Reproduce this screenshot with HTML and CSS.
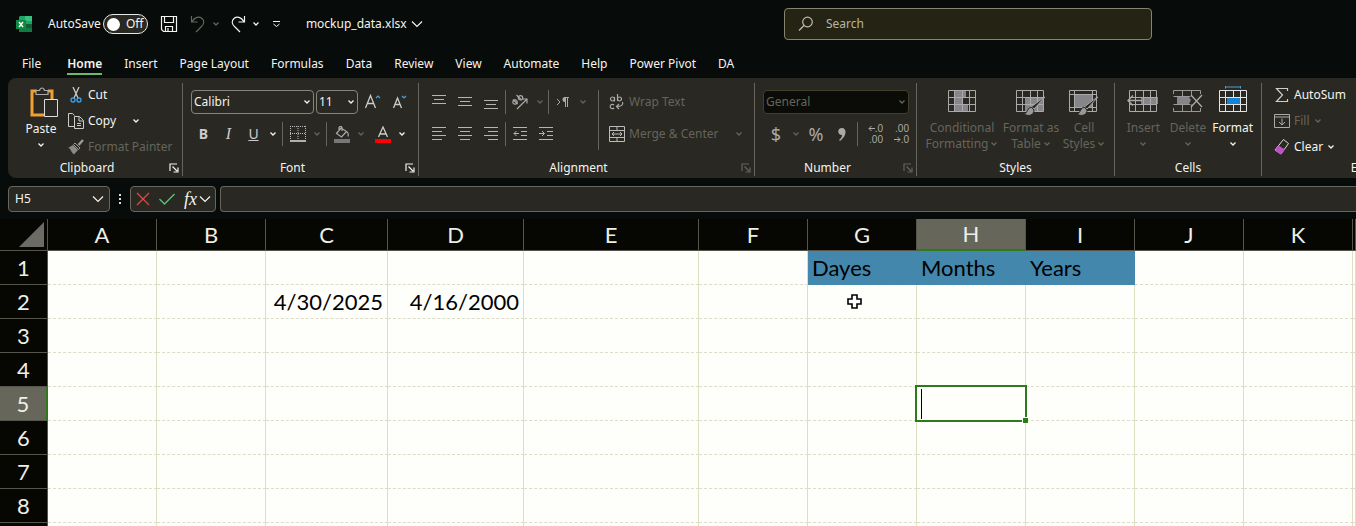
FILE: index.html
```html
<!DOCTYPE html>
<html lang="en">
<head>
<meta charset="utf-8">
<title>mockup_data.xlsx</title>
<link rel="stylesheet" href="styles.css">
</head>
<body>
<svg class="defs" aria-hidden="true">
  <symbol id="chev" viewBox="0 0 8 6"><path d="M1.5 1.5 4 4l2.500-2.500" fill="none" stroke="currentColor" stroke-width="1.300"/></symbol>
  <symbol id="chev-lg" viewBox="0 0 12 8"><path d="m1 1.500 5 5 5-5" fill="none" stroke="currentColor" stroke-width="1.200"/></symbol>
  <symbol id="launch" viewBox="0 0 10 10"><path d="M1 8V1h7M3.500 3.500 8 8M9 4.500V9H4.500" fill="none" stroke="currentColor" stroke-width="1.200"/></symbol>
  <symbol id="grid" viewBox="0 0 28 22"><path d="M.5.5h27v21H.5zM.5 7.500h27M.5 14.500h27M6.500.5v21M14.500.5v21M21.500.5v21" fill="none" stroke="currentColor"/></symbol>
</svg>
<div class="app">
  <header class="titlebar">
    <div class="quick">
      <svg class="logo" width="16" height="16" viewBox="0 0 16 16"><path d="M4 0h12v16H3V1z" fill="#21a366"/><path d="M9 0h7v5H9z" fill="#33c481"/><path d="M3 8h13v8H3z" fill="#107c41"/><path d="M9 8h7v4H9z" fill="#185c37"/><rect y="4" width="10" height="9" fill="#0f8a43"/><path d="m3 6 4 5M7 6l-4 5" stroke="#fff" stroke-width="1.400"/></svg>
      <label class="autosave">AutoSave <span class="switch"><input type="checkbox"><span class="knob"></span><span>Off</span></span></label>
      <button class="ib" aria-label="Save"><svg width="18" height="18" viewBox="0 0 18 18"><path d="M1.500 1.500h15v15h-13l-2-2zM4.500 1.500v6h9v-6M5.500 16.500v-5h7v5M8 13v3" fill="none" stroke="currentColor" stroke-width="1.200"/></svg></button>
      <div class="pair dim"><button class="ib" aria-label="Undo"><svg width="16" height="18" viewBox="0 0 16 18"><path d="M1.500 1v6h6M1.800 6.800C5 2 9 1 12 3.500s2 6-1 8.500l-5 5" fill="none" stroke="currentColor" stroke-width="1.200"/></svg></button><button class="ch" aria-label="Undo list"><svg><use href="#chev"/></svg></button></div>
      <div class="pair"><button class="ib" aria-label="Redo"><svg width="16" height="18" viewBox="0 0 16 18"><path d="M14.500 1v6h-6M14.200 6.800C11 2 7 1 4 3.500s-2 6 1 8.500l5 5" fill="none" stroke="currentColor" stroke-width="1.200"/></svg></button><button class="ch" aria-label="Redo list"><svg><use href="#chev"/></svg></button></div>
      <button class="ib" aria-label="Customize toolbar"><svg width="9" height="8" viewBox="0 0 9 8"><path d="M1 1.500h7M1.500 4l3 2.500 3-2.500" fill="none" stroke="currentColor"/></svg></button>
      <button class="file">mockup_data.xlsx <svg width="12" height="8"><use href="#chev-lg"/></svg></button>
    </div>
    <label class="search"><svg width="16" height="16" viewBox="0 0 16 16"><circle cx="9.500" cy="6" r="4.800" fill="none" stroke="currentColor" stroke-width="1.200"/><path d="m6 9.500-5 5" stroke="currentColor" stroke-width="1.200"/></svg><input type="text" placeholder="Search" aria-label="Search"></label>
  </header>

  <nav class="tabs">
    <button>File</button><button class="active">Home</button><button>Insert</button><button>Page Layout</button><button>Formulas</button><button>Data</button><button>Review</button><button>View</button><button>Automate</button><button>Help</button><button>Power Pivot</button><button>DA</button>
  </nav>

  <section class="ribbon">
    <div class="group clipboard">
      <div class="body">
        <button class="big paste"><svg width="28" height="32" viewBox="0 0 28 32"><path d="M7 4H2v24h12M18 4h4v8" fill="none" stroke="#f0a030" stroke-width="3"/><path d="M6 7.500v-4h3.500C10 1.500 11 1 12 1s2 .5 2.500 2.500H18v4z" fill="#292822" stroke="#aaa" stroke-width="1.200"/><path d="M14.500 12.500h13v17h-13z" fill="#292822" stroke="#ddd"/></svg><span>Paste</span><svg class="c"><use href="#chev"/></svg></button>
        <div class="stack">
          <button><svg width="16" height="16" viewBox="0 0 16 16"><path d="m5 0 5 11M11 0 6 11" stroke="#ccc" stroke-width="1.300"/><circle cx="5" cy="13" r="2" fill="none" stroke="#3a9be0" stroke-width="1.400"/><circle cx="11" cy="13" r="2" fill="none" stroke="#3a9be0" stroke-width="1.400"/></svg>Cut</button>
          <button><svg width="16" height="16" viewBox="0 0 16 16"><path d="M6.500 13.500h-6V.5h4l2 2M6.500 3.500h5l4 4v8h-9zM11 4v4h4M9 10.500h4M9 12.500h4" fill="none" stroke="#ccc"/></svg>Copy<svg class="c far"><use href="#chev"/></svg></button>
          <button class="dim"><svg width="16" height="16" viewBox="0 0 16 16"><path d="m15 1-4.500 5" stroke="#999" stroke-width="2.500"/><path d="m7 4 5 5-1.500 1.500-5-5z" fill="none" stroke="#999"/><path d="M5 6 0 9c3 0 2 3 6 6.500L10 11z" fill="#8a8a8a"/></svg>Format Painter</button>
        </div>
      </div>
      <footer><span>Clipboard</span><button class="launch" aria-label="Clipboard settings"><svg><use href="#launch"/></svg></button></footer>
    </div>

    <div class="group font">
      <div class="body rows">
        <div class="row">
          <span class="combo name"><select aria-label="Font"><option>Calibri</option></select><svg><use href="#chev"/></svg></span>
          <span class="combo size"><select aria-label="Font size"><option>11</option></select><svg><use href="#chev"/></svg></span>
          <button class="t" aria-label="Increase font size"><svg width="16" height="16" viewBox="0 0 16 16"><path d="M.5 14 5.500 1.500 10.500 14M2.500 9.500h6" fill="none" stroke="#ccc" stroke-width="1.300"/><path d="m11 4 2-2 2 2" fill="none" stroke="#4aa0d8" stroke-width="1.200"/></svg></button>
          <button class="t" aria-label="Decrease font size"><svg width="16" height="16" viewBox="0 0 16 16"><path d="M2.500 14 6.500 4l4 10M4 10.500h5" fill="none" stroke="#ccc" stroke-width="1.300"/><path d="m11 2 2 2 2-2" fill="none" stroke="#4aa0d8" stroke-width="1.200"/></svg></button>
        </div>
        <div class="row">
          <button class="t"><b>B</b></button><button class="t"><i>I</i></button><button class="t"><u>U</u></button><button class="ch" aria-label="Underline styles"><svg><use href="#chev"/></svg></button>
          <hr>
          <button class="t" aria-label="Borders"><svg width="16" height="16" viewBox="0 0 16 16"><path d="M.5 0v14M15.500 0v14M8 0v14M0 .5h16M0 7.500h16" stroke="#bbb" stroke-dasharray="1 1" fill="none"/><path d="M0 15h16" stroke="#ddd" stroke-width="1.300"/></svg></button><button class="ch dim" aria-label="Border styles"><svg><use href="#chev"/></svg></button>
          <hr>
          <button class="t" aria-label="Fill color"><svg width="16" height="17" viewBox="0 0 16 17"><path d="m7 2-4.500 5.500 5 3.500 5-5.500zM5 5V1.500C6 0 8 0 8 2v3M12.500 5.500c2 1 2 3 1.500 5" fill="none" stroke="#aaa" stroke-width="1.200"/><path d="M0 13h16v4H0z" fill="#777"/></svg></button><button class="ch dim" aria-label="Fill colors"><svg><use href="#chev"/></svg></button>
          <button class="t last" aria-label="Font color"><svg width="16" height="17" viewBox="0 0 16 17"><path d="M3.500 11 8 1l4.500 10M5 8h6" fill="none" stroke="#ccc" stroke-width="1.300"/><path d="M0 13h16v4H0z" fill="#f00"/></svg></button><button class="ch" aria-label="Font colors"><svg><use href="#chev"/></svg></button>
        </div>
      </div>
      <footer><span>Font</span><button class="launch" aria-label="Font settings"><svg><use href="#launch"/></svg></button></footer>
    </div>

    <div class="group align">
      <div class="body">
        <div class="rows">
          <div class="row">
            <button class="t" aria-label="Top align"><svg class="l"><path d="M0 1.500h14M2 5.500h10M0 9.500h14"/></svg></button><button class="t" aria-label="Middle align"><svg class="l"><path d="M0 3.500h14M2 7.500h10M0 11.500h14"/></svg></button><button class="t" aria-label="Bottom align"><svg class="l"><path d="M0 6.500h14M2 10.500h10M0 14.500h14"/></svg></button>
            <hr>
            <button class="t" aria-label="Orientation"><svg width="18" height="16" viewBox="0 0 18 16"><g fill="none" stroke="#aaa" stroke-width="1.200"><circle cx="4" cy="8" r="2.200"/><path d="m2 5.500 4.500 4.500M5.500 1l4.500 4.500"/><circle cx="9.500" cy="3.800" r="2.200"/><path d="m6 15 9.500-9.500M11.500 5H16v4.500"/></g></svg></button><button class="ch dim" aria-label="Orientation options"><svg><use href="#chev"/></svg></button>
            <hr>
            <button class="t" aria-label="Text direction"><svg width="14" height="12" viewBox="0 0 14 12"><path d="m1 3 3 3-3 3M9.500 2v9M11.500 2v9M8 1.500h5" fill="none" stroke="#aaa"/><path d="M9 1a2.500 2.500 0 0 0 0 5z" fill="#aaa"/></svg></button><button class="ch dim" aria-label="Direction options"><svg><use href="#chev"/></svg></button>
          </div>
          <div class="row">
            <button class="t" aria-label="Align left"><svg class="l"><path d="M0 1.500h14M0 5.500h10M0 9.500h14M0 13.500h10"/></svg></button><button class="t" aria-label="Center"><svg class="l"><path d="M0 1.500h14M2 5.500h10M0 9.500h14M2 13.500h10"/></svg></button><button class="t" aria-label="Align right"><svg class="l"><path d="M0 1.500h14M4 5.500h10M0 9.500h14M4 13.500h10"/></svg></button>
            <hr>
            <button class="t" aria-label="Decrease indent"><svg class="l"><path d="M0 1.500h14M8 5.500h6M8 9.500h6M0 13.500h14M6 7.500H1M3.500 5 1 7.500 3.500 10"/></svg></button><button class="t" aria-label="Increase indent"><svg class="l"><path d="M0 1.500h14M8 5.500h6M8 9.500h6M0 13.500h14M0 7.500h5M3 5l2.500 2.500L3 10"/></svg></button>
          </div>
        </div>
        <hr class="tall">
        <div class="rows wide dim">
          <button><svg width="16" height="16" viewBox="0 0 16 16"><g fill="none" stroke="#aaa" stroke-width="1.200"><circle cx="3.500" cy="5" r="2"/><path d="M5.500 3v4.500M8.500 0v7"/><circle cx="10.500" cy="5" r="2"/><path d="M5 11a2.200 2.200 0 1 0 0 3M13.500 8c1 3-1 4.500-6 4.500M10 10l-2.500 2.500L10 15"/></g></svg>Wrap Text</button>
          <button><svg width="16" height="16" viewBox="0 0 16 16"><path d="M.5.5h15v15H.5zM.5 4.500h15M.5 11.500h15M8 .5v4M8 11.500v4M3 8h10M5 6 3 8l2 2M11 6l2 2-2 2" fill="none" stroke="#bbb"/></svg>Merge &amp; Center<svg class="c far"><use href="#chev"/></svg></button>
        </div>
      </div>
      <footer><span>Alignment</span><button class="launch dim" aria-label="Alignment settings"><svg><use href="#launch"/></svg></button></footer>
    </div>

    <div class="group number">
      <div class="body rows">
        <div class="row"><span class="combo format dim"><select aria-label="Number format"><option>General</option></select><svg><use href="#chev"/></svg></span></div>
        <div class="row">
          <button class="t sym">$</button><button class="ch dim" aria-label="Currencies"><svg><use href="#chev"/></svg></button><button class="t sym">%</button><button class="t" aria-label="Comma style"><svg width="8" height="13" viewBox="0 0 8 13"><path d="M4 0c5 0 5 8-2 13l-1-1c2-1.500 3-3 3-5C-1 7-1 0 4 0z" fill="#aaa"/></svg></button>
          <hr>
          <button class="t dec"><span><svg width="7" height="7" viewBox="0 0 7 7"><path d="M7 3.500H1M3.500 1 1 3.500 3.500 6" fill="none" stroke="#aaa"/></svg>.0</span><span>.00</span></button><button class="t dec"><span>.00</span><span><svg width="7" height="7" viewBox="0 0 7 7"><path d="M0 3.500h6M3.500 1 6 3.500 3.500 6" fill="none" stroke="#aaa"/></svg>.0</span></button>
        </div>
      </div>
      <footer><span>Number</span><button class="launch dim" aria-label="Number settings"><svg><use href="#launch"/></svg></button></footer>
    </div>

    <div class="group styles">
      <div class="body bigs dim">
        <button class="big cf"><svg width="28" height="30" viewBox="0 -4 28 30"><path d="M6 0h12v7h-4v7h6v7H6z" fill="#85858a"/><use href="#grid" width="28" height="22"/></svg><span>Conditional</span><span>Formatting <svg class="c"><use href="#chev"/></svg></span></button>
        <button class="big"><svg width="30" height="30" viewBox="0 -4 30 30"><path d="M9 7h18v14H9z" fill="#85858a"/><use href="#grid" width="28" height="22"/><path d="m29 7-11 12-3-2 12-9z" fill="#292822" stroke="#aaa"/><path d="M15 17c-4 1-3 6-7 7 5 3 10 1 10-4z" fill="#999" stroke="#292822"/></svg><span>Format as</span><span>Table <svg class="c"><use href="#chev"/></svg></span></button>
        <button class="big cs"><svg width="30" height="30" viewBox="0 -4 30 30"><path d="M.5.5h27v21H.5zM.5 4.500h27M5.500.5v21M.5 17.500h27M23.500.5v21" fill="none" stroke="#aaa"/><path d="M6 5h17v12H6z" fill="#85858a"/><path d="m29 7-11 12-3-2 12-9z" fill="#292822" stroke="#aaa"/><path d="M15 17c-4 1-3 6-7 7 5 3 10 1 10-4z" fill="#999" stroke="#292822"/></svg><span>Cell</span><span>Styles <svg class="c"><use href="#chev"/></svg></span></button>
      </div>
      <footer><span>Styles</span></footer>
    </div>

    <div class="group cells">
      <div class="body bigs">
        <button class="big dim"><svg width="32" height="30" viewBox="-2 -4 32 30"><path d="M12 7h17v7H12z" fill="#85858a"/><use href="#grid" width="28" height="22"/><path d="M13 10.500H-1M4 5.500l-5 5 5 5" fill="none" stroke="#aaa" stroke-width="1.400"/></svg><span>Insert</span><svg class="c"><use href="#chev"/></svg></button>
        <button class="big dim"><svg width="30" height="30" viewBox="0 -4 30 30"><path d="M.5 4V.5h27V4M.5 18v3.500h27V18M.5 6.500h17M.5 14.500h17M9.500.5v6M18.500.5v6M9.500 14.500v7M18.500 14.500v7" fill="none" stroke="#999"/><path d="M4 7h12l2 3-2 4H4z" fill="#85858a"/><path d="m18 5 11 12M29 5 18 17" stroke="#aaa" stroke-width="1.300"/></svg><span>Delete</span><svg class="c"><use href="#chev"/></svg></button>
        <button class="big bright"><svg width="28" height="30" viewBox="0 -4 28 30"><use href="#grid" width="28" height="22"/><path d="M8 8h13v6H8z" fill="#1683d8"/><path d="M6.500-4.500v3M21.500-4.500v3M6.500-3h15" stroke="#4aa0d8" fill="none"/></svg><span>Format</span><svg class="c"><use href="#chev"/></svg></button>
      </div>
      <footer><span>Cells</span></footer>
    </div>

    <div class="group editing">
      <div class="body">
        <div class="stack">
          <button><svg width="16" height="16" viewBox="0 0 16 16"><path d="M13.500 4V1.500h-11L8.500 8l-6 6.500h11V12" fill="none" stroke="#ccc" stroke-width="1.200"/></svg>AutoSum</button>
          <button class="dim"><svg width="16" height="16" viewBox="0 0 16 16"><path d="M.5 1.500h15v13H.5zM.5 4h15M8 5.500V12M5 9l3 3 3-3" fill="none" stroke="#aaa"/></svg>Fill<svg class="c"><use href="#chev"/></svg></button>
          <button><svg width="16" height="16" viewBox="0 0 16 16"><path d="m9.500.5 5 4-7.500 10.500-6-4z" fill="none" stroke="#ddd"/><path d="m4.500 6.500 6.500 4-4 5-6-4z" fill="#c050c8"/></svg>Clear<svg class="c"><use href="#chev"/></svg></button>
        </div>
      </div>
      <footer><span>Editing</span></footer>
    </div>
  </section>

  <div class="formula">
    <label class="box namebox"><input type="text" value="H5" aria-label="Name box"><svg width="12" height="8"><use href="#chev-lg"/></svg></label>
    <svg class="dots" width="4" height="12" viewBox="0 0 4 12"><path d="M1 1h2v2H1zM1 5h2v2H1zM1 9h2v2H1z" fill="#ddd"/></svg>
    <div class="box acts">
      <button aria-label="Cancel"><svg width="14" height="14" viewBox="0 0 14 14"><path d="m1 1 12 12M13 1 1 13" stroke="#e04848" stroke-width="1.300"/></svg></button>
      <button aria-label="Enter"><svg width="16" height="12" viewBox="0 0 16 12"><path d="m.5 6 5 5L15.500 1" fill="none" stroke="#5dbd78" stroke-width="1.400"/></svg></button>
      <button class="fx"><i>fx</i><svg width="12" height="8"><use href="#chev-lg"/></svg></button>
    </div>
    <input class="box bar" type="text" aria-label="Formula bar">
  </div>

  <main class="sheet">
    <table>
      <colgroup><col class="rh"><col class="n"><col class="n"><col class="c3"><col class="c4"><col class="c5"><col class="n"><col class="n"><col class="n"><col class="n"><col class="n"><col class="n"><col></colgroup>
      <thead><tr><th class="corner"><svg width="25" height="25" viewBox="0 0 25 25"><path d="M25 0v25H0z" fill="#6c6c64"/></svg></th><th>A</th><th>B</th><th>C</th><th>D</th><th>E</th><th>F</th><th>G</th><th class="sel">H</th><th>I</th><th>J</th><th>K</th><th></th></tr></thead>
      <tbody>
        <tr><th>1</th><td></td><td></td><td></td><td></td><td></td><td></td><td class="blue">Dayes</td><td class="blue">Months</td><td class="blue">Years</td><td></td><td></td><td></td></tr>
        <tr><th>2</th><td></td><td></td><td class="num">4/30/2025</td><td class="num">4/16/2000</td><td></td><td></td><td><svg class="cursor" width="15" height="15" viewBox="0 0 15 15"><path d="M5 1h5v4h4v5h-4v4H5v-4H1V5h4z" fill="#fff" stroke="#000" stroke-width="1.600"/></svg></td><td></td><td></td><td></td><td></td><td></td></tr>
        <tr><th>3</th><td></td><td></td><td></td><td></td><td></td><td></td><td></td><td></td><td></td><td></td><td></td><td></td></tr>
        <tr><th>4</th><td></td><td></td><td></td><td></td><td></td><td></td><td></td><td></td><td></td><td></td><td></td><td></td></tr>
        <tr><th class="sel">5</th><td></td><td></td><td></td><td></td><td></td><td></td><td></td><td class="active"><div class="edit"></div></td><td></td><td></td><td></td><td></td></tr>
        <tr><th>6</th><td></td><td></td><td></td><td></td><td></td><td></td><td></td><td></td><td></td><td></td><td></td><td></td></tr>
        <tr><th>7</th><td></td><td></td><td></td><td></td><td></td><td></td><td></td><td></td><td></td><td></td><td></td><td></td></tr>
        <tr><th>8</th><td></td><td></td><td></td><td></td><td></td><td></td><td></td><td></td><td></td><td></td><td></td><td></td></tr>
        <tr><th></th><td></td><td></td><td></td><td></td><td></td><td></td><td></td><td></td><td></td><td></td><td></td><td></td></tr>
      </tbody>
    </table>
  </main>
</div>
</body>
</html>
```
FILE: styles.css
```css
:root { --bg: #070b09; --panel: #292822; --line: #66665c; --text: #f4f4f0; --dim: #65655c; }
* { box-sizing: border-box; }
body { margin: 0; background: var(--bg); color: var(--text); font: 12px/16px "Noto Sans", "Open Sans", sans-serif; }
.defs { position: absolute; width: 0; height: 0; }
.app { display: flex; flex-direction: column; height: 100vh; overflow: hidden; }
button, input, select { font: inherit; color: inherit; background: none; border: 0; padding: 0; margin: 0; }
button { display: flex; align-items: center; justify-content: center; white-space: nowrap; flex: none; }
svg { flex: none; display: block; }
hr { width: 1px; height: 24px; margin: 0 2px; border: 0; background: var(--line); flex: none; }
.dim { color: var(--dim); }
.ch { width: 16px; height: 24px; }
.ch svg, .c { width: 8px; height: 6px; }

.titlebar { display: flex; align-items: center; height: 48px; flex: none; }
.quick { display: flex; align-items: center; width: 784px; padding-left: 16px; }
.autosave { display: flex; align-items: center; gap: 2px; margin: 0 12px 0 16px; }
.switch { display: flex; align-items: center; gap: 6px; width: 45px; height: 20px; padding-left: 3px; border: 1px solid #e8e8e8; border-radius: 10px; background: #292822; }
.switch input { position: absolute; opacity: 0; margin: 0; }
.knob { width: 13px; height: 13px; border-radius: 50%; background: #fff; }
.pair { display: flex; margin-left: 12px; align-items: center; }
.pair + .pair { margin-left: 4px; }
.pair .ch { width: 20px; }
.pair + .ib { margin-left: 6px; }
.file { margin-left: 25px; gap: 4px; }
.search { display: flex; align-items: center; gap: 12px; flex: 0 1 368px; height: 32px; padding-left: 13px; border: 1px solid #85856f; border-radius: 4px; background: #252414; color: #bdbdb0; }
.search input { flex: 1; min-width: 0; }
.search input::placeholder { color: #b5b5a6; opacity: 1; }

.tabs { display: flex; gap: 22px; height: 30px; padding: 7px 0 0 22px; flex: none; }
.tabs button { height: 20px; border-bottom: 2px solid transparent; }
.tabs .active { margin-left: 4px; font-weight: 600; border-color: #6fb86f; }

.ribbon { display: flex; flex: none; height: 100px; margin-left: 8px; padding: 5px 0 2px; background: var(--panel); border-radius: 8px 0 0 8px; overflow: hidden; }
.group { display: flex; flex-direction: column; justify-content: space-between; flex: none; border-right: 1px solid var(--line); }
.clipboard { width: 175px; }
.font { width: 236px; }
.align { width: 336px; }
.number { width: 162px; }
.styles { width: 198px; }
.cells { width: 147px; }
.editing { width: 218px; }
.group footer { display: flex; align-items: center; height: 16px; }
.group footer span { flex: 1; text-align: center; }
.launch { width: 16px; }
.launch svg { width: 10px; height: 10px; }
.body { display: flex; }
.rows { display: flex; flex-direction: column; gap: 8px; padding-top: 7px; }
.row { display: flex; align-items: center; height: 24px; }
.stack { display: flex; flex-direction: column; gap: 10px; padding-top: 4px; }
.stack button { height: 16px; gap: 4px; justify-content: flex-start; }
.far { margin-left: 12px; }
.big { flex-direction: column; justify-content: flex-start; }
.big > span { display: flex; align-items: center; gap: 2px; }
.paste { width: 60px; padding: 4px 0 0 6px; }
.paste > svg:first-child { margin: 0 0 2px 6px; }
.paste .c { margin-top: 5px; }
.t { width: 26px; height: 24px; font-size: 14px; color: #ccc; }
.t i { font-family: "Liberation Serif", serif; font-size: 16px; }
.combo { position: relative; height: 24px; border: 1px solid #85857a; border-radius: 4px; }
.combo select { width: 100%; height: 100%; padding-left: 2px; appearance: none; }
.combo svg { position: absolute; right: 2px; top: 8px; width: 8px; height: 6px; pointer-events: none; }
.name { width: 123px; margin-right: 2px; }
.size { width: 42px; margin-right: 2px; }
.font .body, .number .body { padding-left: 8px; }
.font .ch, .align .ch { width: 14px; }
.font .row:last-child .t { width: 25px; }
.font .row .t.last { margin-left: 2px; }
.align .body { padding-left: 7px; }
.align .row hr { margin: 0 1px; }
.l { width: 14px; height: 16px; fill: none; stroke: #b5b5b5; }
.align .tall { height: 60px; margin: 7px 10px 0; }
.align .rows:first-child { width: 162px; }
.wide button { height: 24px; gap: 4px; justify-content: flex-start; }
.format { width: 146px; background: #0b0c08; border-color: #40402c; }
.sym { font-size: 18px; }
.number .t { color: #aaa; }
.number .ch { width: 14px; }
.number .t.dec { flex-direction: column; font: 10px/11px "Liberation Sans", sans-serif; align-items: flex-end; padding-right: 3px; }
.dec span { display: flex; align-items: center; height: 11px; }
.bigs .big { flex: 1; }
.bigs .big > svg:first-child { color: #aaa; margin: 3px 0 4px; }
.bigs .bright > svg:first-child { color: #e4e4e4; }
.bigs .big > .c { margin-top: 5px; }
.styles .body { padding-left: 8px; }
.styles .big { flex: none; width: 64px; }
.styles .cf { width: 74px; }
.styles .cs { width: 42px; }
.cells .body { padding: 0 6px; }
.editing .body { padding-left: 12px; }

.formula { display: flex; align-items: center; flex: none; height: 41px; padding-left: 8px; }
.box { height: 26px; border: 1px solid #66665c; border-radius: 4px; background: var(--panel); }
.namebox { display: flex; align-items: center; width: 102px; padding: 0 5px 0 6px; }
.namebox input { flex: 1; min-width: 0; }
.dots { margin: 0 8px; }
.acts { display: flex; align-items: center; gap: 9px; width: 86px; padding: 0 0 0 5px; margin-right: 4px; }
.fx { gap: 2px; }
.fx i { font: italic 18px/20px "Liberation Serif", serif; }
.bar { flex: 1; min-width: 0; border-right: 0; border-radius: 4px 0 0 4px; padding-left: 6px; }

.sheet { flex: 1; min-height: 0; overflow: hidden; background: #fefefa; }
table { width: 100%; table-layout: fixed; border-collapse: separate; border-spacing: 0; font: 22px/30px Lato, "Noto Sans", sans-serif; color: #000; }
.rh { width: 48px; }
.n { width: 109px; }
.c3 { width: 122px; }
.c4 { width: 136px; }
.c5 { width: 175px; }
th { height: 34px; padding: 0; font-weight: 400; color: #eeeee6; background: #060602; border-right: 1px solid #55554c; border-bottom: 1px solid #55554c; }
thead th { height: 32px; }
td { padding: 0 4px; border-right: 1px solid #dedfc0; border-bottom: 1px dashed #dcdcc8; white-space: nowrap; }
.corner svg { margin-left: 19px; }
.sel { background: #66665a; }
thead .sel { border-bottom: 2px solid #2c7a1c; }
tbody .sel { border-right: 2px solid #2c7a1c; }
.num { text-align: right; }
.blue { background: #4487ad; border-color: #4487ad; }
.cursor { margin-left: 35px; }
.active { position: relative; }
.edit { position: absolute; inset: -2px; border: 2px solid #2c7a1c; }
.edit::before { content: ""; position: absolute; left: 4px; top: 2px; bottom: 1px; width: 1px; background: #000; }
.edit::after { content: ""; position: absolute; right: -3px; bottom: -3px; width: 5px; height: 5px; background: #2c7a1c; border: 1px solid #fff; border-width: 1px 0 0 1px; }
```
